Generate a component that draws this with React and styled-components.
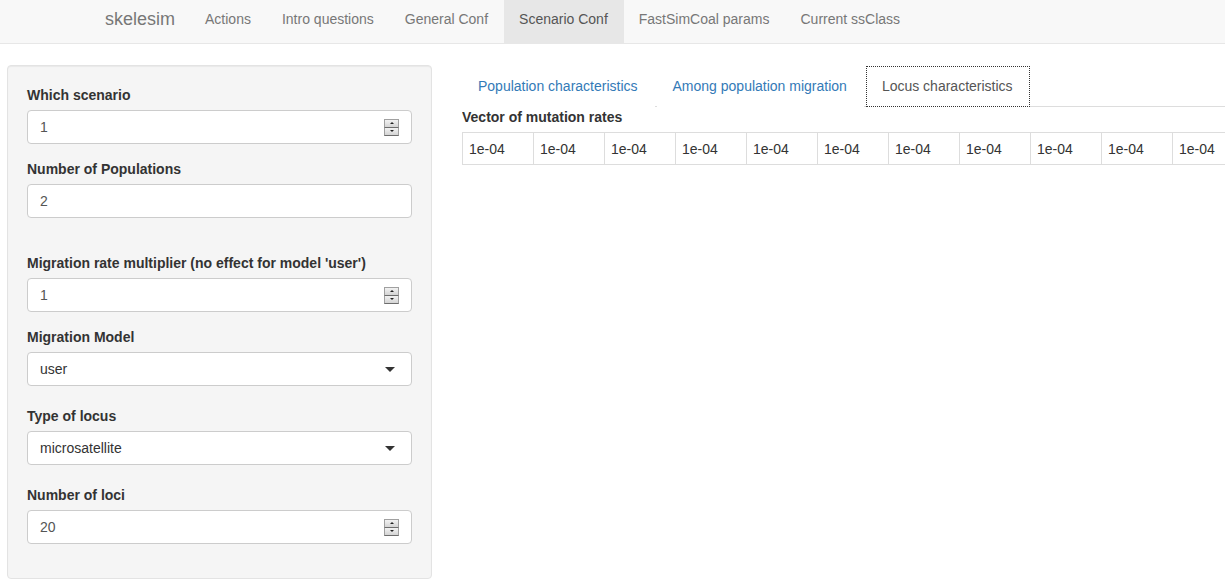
import React from 'react';
import styled, { createGlobalStyle } from 'styled-components';

const GlobalStyle = createGlobalStyle`
  body {
    margin: 0;
    font-family: "Liberation Sans", Arial, Helvetica, sans-serif;
    font-size: 14px;
    line-height: 20px;
    color: #333;
    background: #fff;
  }
  * { box-sizing: border-box; }
`;

const Navbar = styled.nav`
  display: flex;
  height: 44px;
  background: #f8f8f8;
  border-bottom: 1px solid #e7e7e7;
  padding-left: 90px;
`;

const Brand = styled.a`
  padding: 9px 15px 0;
  font-size: 18px;
  line-height: 20px;
  color: #777;
`;

const NavItem = styled.a`
  display: block;
  padding: 9px 16px 0 15px;
  height: 43px;
  color: ${p => (p.active ? '#555' : '#777')};
  background: ${p => (p.active ? '#e7e7e7' : 'transparent')};
`;

const Body = styled.div`
  display: flex;
  padding: 21px 0 0 7px;
`;

const Well = styled.div`
  width: 425px;
  flex-shrink: 0;
  padding: 19px;
  background: #f5f5f5;
  border: 1px solid #e3e3e3;
  border-radius: 4px;
  box-shadow: inset 0 1px 1px rgba(0, 0, 0, 0.05);
`;

const FormGroup = styled.div`
  margin-bottom: ${p => p.gap || 15}px;
`;

const Label = styled.div`
  font-weight: bold;
  margin-bottom: 5px;
`;

const Spacer = styled.div`
  height: 20px;
`;

const Field = styled.div`
  display: flex;
  align-items: center;
  justify-content: space-between;
  height: 34px;
  padding: 0 12px;
  background: #fff;
  border: 1px solid #ccc;
  border-radius: 4px;
  color: ${p => (p.select ? '#333' : '#555')};
`;

const Spinner = styled.div`
  display: flex;
  flex-direction: column;
  width: 15px;
  height: 17px;
`;

const SpinBtn = styled.div`
  flex: 1;
  display: flex;
  align-items: center;
  justify-content: center;
  background: linear-gradient(#f2f2f2, #d4d4d4);
  border: 1px solid #a0a0a0;
  border-bottom-color: #6d6d6d;
  & + & { border-top: none; }
`;

const Tri = styled.span`
  width: 0;
  height: 0;
  border-left: 2px solid transparent;
  border-right: 2px solid transparent;
  ${p => (p.up ? 'border-bottom: 2px solid #222;' : 'border-top: 2px solid #222;')}
`;

const Caret = styled.span`
  width: 0;
  height: 0;
  margin-right: 4px;
  border-left: 5px solid transparent;
  border-right: 5px solid transparent;
  border-top: 5px solid #333;
`;

const Main = styled.div`
  flex: 1;
  min-width: 0;
  margin: 1px 0 0 30px;
  overflow: hidden;
`;

const Tabs = styled.div`
  display: flex;
  border-bottom: 1px solid #ddd;
`;

const Tab = styled.a`
  display: block;
  padding: 9px 16px 10px 15px;
  margin-right: 2px;
  margin-bottom: -1px;
  height: 41px;
  color: ${p => (p.active ? '#555' : '#337ab7')};
  background: #fff;
  border: 1px ${p => (p.active ? 'dotted #333' : 'solid transparent')};
  border-bottom-color: ${p => (p.active ? '#333' : 'transparent')};
`;

const Title = styled.div`
  font-weight: bold;
  margin-bottom: 5px;
`;

const Table = styled.table`
  border-collapse: collapse;
  table-layout: fixed;
`;

const Cell = styled.td`
  width: 71px;
  min-width: 71px;
  height: 32px;
  padding: 5px 6px;
  border: 1px solid #ddd;
  white-space: nowrap;
`;

const NumberField = ({ value }) => (
  <Field>
    <span>{value}</span>
    <Spinner>
      <SpinBtn><Tri up /></SpinBtn>
      <SpinBtn><Tri /></SpinBtn>
    </Spinner>
  </Field>
);

const SelectField = ({ value }) => (
  <Field select>
    <span>{value}</span>
    <Caret />
  </Field>
);

const navItems = ['Actions', 'Intro questions', 'General Conf', 'Scenario Conf', 'FastSimCoal params', 'Current ssClass'];
const tabs = ['Population characteristics', 'Among population migration', 'Locus characteristics'];
// only the cells that fit in the visible width
const rates = Array.from({ length: 11 }, () => '1e-04');

export default function App() {
  return (
    <>
      <GlobalStyle />
      <Navbar>
        <Brand>skelesim</Brand>
        {navItems.map(n => (
          <NavItem key={n} active={n === 'Scenario Conf'}>{n}</NavItem>
        ))}
      </Navbar>
      <Body>
        <Well>
          <FormGroup>
            <Label>Which scenario</Label>
            <NumberField value="1" />
          </FormGroup>
          <FormGroup>
            <Label>Number of Populations</Label>
            <Field>2</Field>
          </FormGroup>
          <Spacer />
          <FormGroup>
            <Label>Migration rate multiplier (no effect for model 'user')</Label>
            <NumberField value="1" />
          </FormGroup>
          <FormGroup gap={20}>
            <Label>Migration Model</Label>
            <SelectField value="user" />
          </FormGroup>
          <FormGroup gap={20}>
            <Label>Type of locus</Label>
            <SelectField value="microsatellite" />
          </FormGroup>
          <FormGroup>
            <Label>Number of loci</Label>
            <NumberField value="20" />
          </FormGroup>
        </Well>
        <Main>
          <Tabs>
            {tabs.map(t => (
              <Tab key={t} active={t === 'Locus characteristics'}>{t}</Tab>
            ))}
          </Tabs>
          <Title>Vector of mutation rates</Title>
          <Table>
            <tbody>
              <tr>
                {rates.map((r, i) => <Cell key={i}>{r}</Cell>)}
              </tr>
            </tbody>
          </Table>
        </Main>
      </Body>
    </>
  );
}
